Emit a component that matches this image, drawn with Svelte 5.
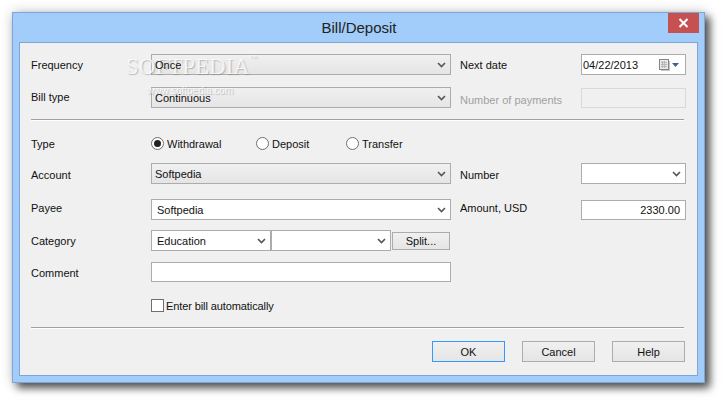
<script>
    const chevron = "M1 1l3.5 3.5L8 1";
</script>

<div class="desktop">
    <div class="window">
        <div class="titlebar">
            <span class="title">Bill/Deposit</span>
            <div class="close">
                <svg width="11" height="10" viewBox="0 0 11 10"><path d="M1.5 1l8 8M9.5 1l-8 8" stroke="#fff" stroke-width="2" fill="none"/></svg>
            </div>
        </div>

        <div class="client">
            <div class="row first">
                <span class="label">Frequency</span>
                <div class="combo flat"><span>Once</span><svg class="chev" width="9" height="6" viewBox="0 0 9 6"><path d={chevron}/></svg></div>
                <span class="label side">Next date</span>
                <div class="datebox">
                    <span>04/22/2013</span>
                    <svg class="cal" width="12" height="13" viewBox="0 0 12 13">
                        <rect x="1.5" y="1.5" width="9" height="10" fill="#e6e8eb" stroke="#858585"/>
                        <path d="M3 4.500h6M3 6.500h6M3 8.500h6M4.500 3v7M6.500 3v7" stroke="#b4b8bd" stroke-width="1" fill="none"/>
                        <path d="M11.500 3v9.500H3" stroke="#c4c4c4" fill="none"/>
                    </svg>
                    <svg class="arrow" width="7" height="4" viewBox="0 0 7 4"><path d="M0 0h7L3.500 4z" fill="#44618a"/></svg>
                </div>
            </div>
            <div class="row second">
                <span class="label up1">Bill type</span>
                <div class="combo flat"><span>Continuous</span><svg class="chev" width="9" height="6" viewBox="0 0 9 6"><path d={chevron}/></svg></div>
                <span class="label side disabled">Number of payments</span>
                <div class="field off"></div>
            </div>

            <div class="rule top"></div>

            <div class="row radios">
                <span class="label">Type</span>
                <div class="options">
                    <span class="radio w1"><i class="dot on"></i>Withdrawal</span>
                    <span class="radio w2"><i class="dot"></i>Deposit</span>
                    <span class="radio"><i class="dot"></i>Transfer</span>
                </div>
            </div>
            <div class="row account">
                <span class="label down1">Account</span>
                <div class="combo flat"><span>Softpedia</span><svg class="chev" width="9" height="6" viewBox="0 0 9 6"><path d={chevron}/></svg></div>
                <span class="label side down1">Number</span>
                <div class="combo white small"><span></span><svg class="chev" width="9" height="6" viewBox="0 0 9 6"><path d={chevron}/></svg></div>
            </div>
            <div class="row payee">
                <span class="label up2">Payee</span>
                <div class="combo white"><span class="pad">Softpedia</span><svg class="chev" width="9" height="6" viewBox="0 0 9 6"><path d={chevron}/></svg></div>
                <span class="label side up2">Amount, USD</span>
                <div class="field amount">2330.00</div>
            </div>
            <div class="row category">
                <span class="label">Category</span>
                <div class="split">
                    <div class="combo white cat"><span class="pad">Education</span><svg class="chev" width="9" height="6" viewBox="0 0 9 6"><path d={chevron}/></svg></div>
                    <div class="combo white cat"><span></span><svg class="chev" width="9" height="6" viewBox="0 0 9 6"><path d={chevron}/></svg></div>
                    <div class="btn splitbtn">Split...</div>
                </div>
            </div>
            <div class="row comment">
                <span class="label down1">Comment</span>
                <div class="field wide"></div>
            </div>
            <div class="row check">
                <span class="label"></span>
                <span class="checkline"><i class="box"></i>Enter bill automatically</span>
            </div>

            <div class="rule bottom"></div>

            <div class="buttons">
                <div class="btn action default">OK</div>
                <div class="btn action">Cancel</div>
                <div class="btn action">Help</div>
            </div>

            <div class="mark">
                <span class="mark-big">SOFTPEDIA<sup>™</sup></span>
                <span class="mark-url">www.softpedia.com</span>
            </div>
        </div>
    </div>
</div>

<style>
    :global(body) {
        background: #fff;
    }

    .desktop {
        box-sizing: border-box;
        width: 725px;
        height: 403px;
        padding: 12px 0 0 12px;
        overflow: hidden;
    }

    .window {
        box-sizing: border-box;
        width: 693px;
        height: 371px;
        padding: 0 6px 6px;
        position: relative;
        background: #a2ccf9;
        border: 1px solid #7da6d6;
        box-shadow: 5px 5px 8px rgba(0, 0, 0, 0.65), 0 0 12px rgba(0, 0, 0, 0.2);
        font-family: "Liberation Sans", sans-serif;
        font-size: 11px;
        color: #111;
    }

    .titlebar {
        height: 29px;
        display: flex;
        align-items: center;
        justify-content: center;
        position: relative;
    }

    .title {
        font-size: 15px;
        color: #222;
        margin-left: 1px;
    }

    .close {
        position: absolute;
        right: -1px;
        top: 0;
        width: 31px;
        height: 20px;
        background: #c75050;
        display: flex;
        align-items: center;
        justify-content: center;
    }

    .client {
        box-sizing: border-box;
        height: 334px;
        padding: 11px 11px 0;
        background: #f0f0f0;
        border: 1px solid #7da6d6;
        position: relative;
    }

    .row {
        display: flex;
        align-items: center;
        height: 21px;
    }

    .second { margin-top: 12px; }
    .radios { margin-top: 14px; height: 17px; }
    .account { margin-top: 11px; }
    .payee { margin-top: 15px; }
    .category { margin-top: 10px; }
    .comment { margin-top: 11px; height: 20px; }
    .check { margin-top: 17px; height: 13px; }

    .label {
        width: 120px;
        flex: none;
    }

    .up1 { padding-bottom: 2px; }
    .up2 { padding-bottom: 3px; }
    .down1 { padding-top: 2px; }

    .side {
        width: 121px;
        margin-left: 9px;
    }

    .disabled {
        color: #a0a0a0;
        padding-top: 4px;
    }

    .combo {
        box-sizing: border-box;
        width: 300px;
        height: 21px;
        flex: none;
        display: flex;
        align-items: center;
        justify-content: space-between;
        padding: 0 3px 0 3px;
        border: 1px solid #acacac;
    }

    .combo span {
        position: relative;
        z-index: 1;
    }

    .flat { background: linear-gradient(#f0f0f0, #e5e5e5); }
    .white { background: #fff; }
    .small { width: 105px; }
    .pad { padding-left: 2px; }

    .chev {
        margin-right: 1px;
        flex: none;
    }

    .chev path {
        fill: none;
        stroke: #555;
        stroke-width: 1.6;
    }

    .field {
        box-sizing: border-box;
        width: 105px;
        height: 20px;
        flex: none;
        background: #fff;
        border: 1px solid #acacac;
    }

    .off {
        background: #f0f0f0;
        border-color: #d9d9d9;
    }

    .amount {
        line-height: 18px;
        text-align: right;
        padding-right: 5px;
    }

    .wide { width: 300px; }

    .datebox {
        box-sizing: border-box;
        width: 105px;
        height: 21px;
        flex: none;
        display: flex;
        align-items: center;
        background: #fff;
        border: 1px solid #acacac;
        padding-left: 1px;
    }

    .cal { margin-left: auto; }
    .arrow { margin: 0 6px 0 2px; }

    .rule {
        height: 1px;
        background: #a0a0a0;
        border-bottom: 1px solid #fff;
        margin-right: 2px;
    }

    .rule.top { margin-top: 11px; }
    .rule.bottom { margin-top: 15px; }

    .options {
        display: flex;
        align-items: center;
    }

    .radio {
        display: flex;
        align-items: center;
        gap: 3px;
    }

    .w1 { width: 105px; }
    .w2 { width: 90px; }

    .dot {
        box-sizing: border-box;
        width: 13px;
        height: 13px;
        border: 1px solid #707070;
        border-radius: 50%;
        background: #fff;
        display: block;
        position: relative;
    }

    .dot.on::after {
        content: "";
        position: absolute;
        left: 2px;
        top: 2px;
        width: 7px;
        height: 7px;
        border-radius: 50%;
        background: #222;
    }

    .split {
        display: flex;
        align-items: center;
        width: 300px;
    }

    .cat { width: 120px; margin-right: 0; }

    .btn {
        box-sizing: border-box;
        display: flex;
        align-items: center;
        justify-content: center;
        background: linear-gradient(#f0f0f0, #e5e5e5);
        border: 1px solid #acacac;
    }

    .splitbtn {
        width: 58px;
        height: 18px;
        margin-left: 1px;
    }

    .checkline {
        display: flex;
        align-items: center;
        gap: 2px;
        letter-spacing: -0.1px;
    }

    .box {
        box-sizing: border-box;
        width: 13px;
        height: 13px;
        display: block;
        background: #fff;
        border: 1px solid #707070;
    }

    .buttons {
        display: flex;
        justify-content: flex-end;
        gap: 17px;
        margin: 12px 1px 0 0;
    }

    .action {
        width: 73px;
        height: 21px;
    }

    .default { border-color: #3399ff; }

    .mark {
        position: absolute;
        left: 106px;
        top: 11px;
        display: flex;
        flex-direction: column;
        color: rgba(255, 255, 255, 0.8);
        text-shadow: 1px 1px 1px rgba(120, 120, 120, 0.45);
        pointer-events: none;
    }

    .mark-big {
        font-family: "Liberation Serif", serif;
        font-size: 23px;
        line-height: 26px;
    }

    .mark-big sup {
        font-size: 7px;
        vertical-align: 14px;
        line-height: 0;
    }

    .mark-url {
        font-size: 10px;
        margin: 4px 0 0 21px;
        line-height: 14px;
    }
</style>
